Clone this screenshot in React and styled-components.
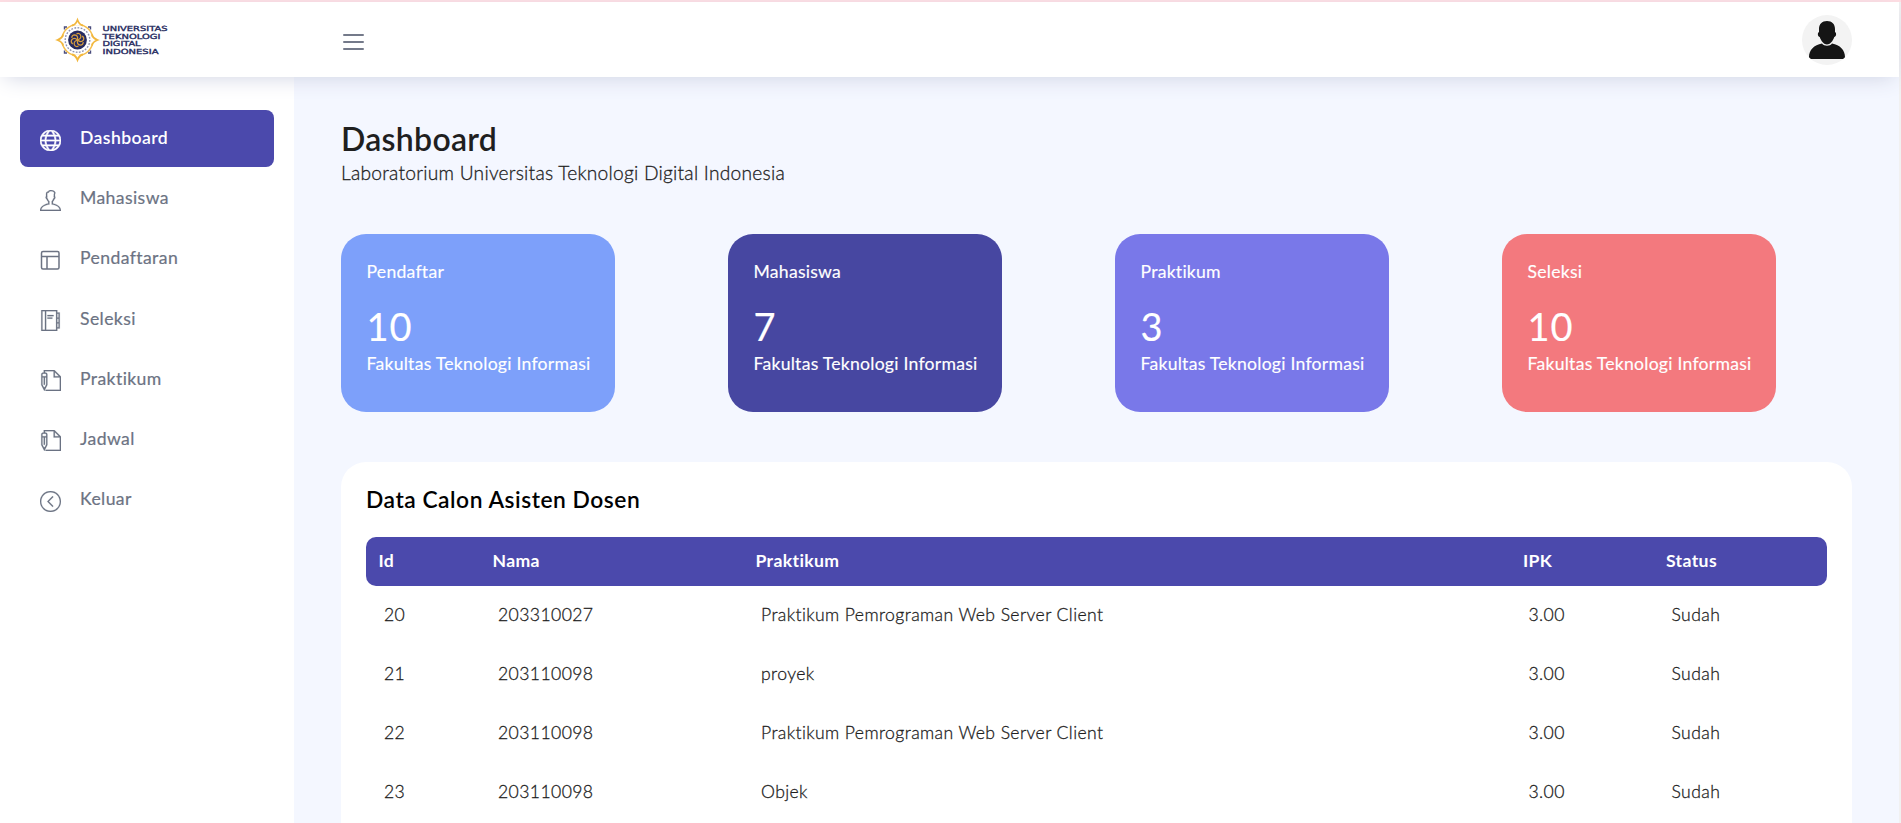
import React from 'react';
import styled, { createGlobalStyle } from 'styled-components';
import { TfiWorld, TfiUser, TfiAgenda, TfiWrite, TfiArrowCircleLeft } from 'react-icons/tfi';

const GlobalStyle = createGlobalStyle`
  * { box-sizing: border-box; }
  html { background: #f1f1f1; }
  body {
    margin: 0;
    height: 823px;
    overflow: hidden;
    font-family: Lato, "Open Sans", sans-serif;
    color: #1f1f1f;
  }
  h1, h2, p { margin: 0; }
`;

const Page = styled.div`
  height: 823px;
  display: flex;
  flex-direction: column;
  border-top: 2px solid #ffdde2;
`;

const Topbar = styled.header`
  position: relative;
  z-index: 2;
  flex: 0 0 75px;
  width: 1899px;
  display: flex;
  align-items: center;
  background: #fff;
  box-shadow: 0 5px 21px -5px #cdd1e1;
`;

const Brand = styled.div`
  width: 294px;
  padding-left: 54px;
  line-height: 0;
`;

const MenuButton = styled.button`
  display: flex;
  flex-direction: column;
  gap: 5px;
  margin: 4px 0 0 49px;
  padding: 0;
  border: 0;
  background: none;
`;

const MenuLine = styled.span`
  width: 21px;
  height: 2px;
  border-radius: 1px;
  background: #747a8a;
`;

const Avatar = styled.div`
  width: 50px;
  height: 50px;
  margin: 0 47px 0 auto;
  border-radius: 50%;
  overflow: hidden;
  background: #f3f3f3;
`;

const Body = styled.div`
  flex: 1;
  min-height: 0;
  width: 1899px;
  display: flex;
  background: #f4f7ff;
`;

const Sidebar = styled.nav`
  flex: 0 0 294px;
  padding: 33px 20px 0;
  display: flex;
  flex-direction: column;
  gap: 3.2px;
  background: #fff;
`;

const NavItem = styled.a`
  display: flex;
  align-items: center;
  height: 57px;
  padding-left: 20px;
  border-radius: 8px;
  font-size: 17.6px;
  letter-spacing: 0.4px;
  font-weight: ${(p) => (p.$active ? 600 : 400)};
  -webkit-text-stroke: ${(p) => (p.$active ? '0' : '0.2px')};
  color: ${(p) => (p.$active ? '#fff' : '#6c7383')};
  background: ${(p) => (p.$active ? '#4b49ac' : 'transparent')};

  svg {
    width: 21px;
    height: 21px;
    margin: 3px 19px 0 0;
    stroke-width: ${(p) => (p.$active ? 0.5 : 0.15)};
  }
`;

const NavLabel = styled.span`
  padding-bottom: 2px;
`;

const Main = styled.main`
  flex: 1;
  padding: 40px 47px 0;
  display: flex;
  flex-direction: column;
`;

const Title = styled.h1`
  font-size: 32px;
  line-height: 43px;
  font-weight: 600;
  letter-spacing: 0.28px;
`;

const Subtitle = styled.p`
  font-size: 19.2px;
  line-height: 26px;
  font-weight: 300;
  letter-spacing: 0.24px;
  -webkit-text-stroke: 0.3px;
`;

const Stats = styled.section`
  display: flex;
  gap: 113px;
  margin: 48px 0 50px;
`;

const StatCard = styled.article`
  width: 274px;
  height: 178px;
  padding: 25px 0 0 25.5px;
  border-radius: 25px;
  color: #fff;
  font-size: 17.6px;
  line-height: 26px;
  letter-spacing: 0.25px;
  white-space: nowrap;
  -webkit-text-stroke: 0.15px;
  background: ${(p) => p.$color};
`;

const StatValue = styled.p`
  margin: 17px 0 1px;
  font-size: 38px;
  line-height: 48px;
  letter-spacing: 1px;
`;

const Panel = styled.section`
  flex: 1;
  padding: 22.5px 25px 0;
  border-radius: 25px 25px 0 0;
  background: #fff;
  overflow: hidden;
`;

const PanelTitle = styled.h2`
  margin-bottom: 24.5px;
  font-size: 22.8px;
  line-height: 28px;
  font-weight: 600;
  letter-spacing: 0.52px;
  color: #010101;
`;

const Row = styled.div`
  display: grid;
  grid-template-columns: 114px 263px 767.5px 143px 1fr;
  align-items: center;
  height: 59px;
  padding: 0 0 2px 18px;
  font-size: 17.6px;
  font-weight: 300;
  letter-spacing: 0.4px;
  -webkit-text-stroke: 0.3px;
`;

const HeadRow = styled(Row)`
  height: 49px;
  padding-left: 12.5px;
  border-radius: 10px;
  font-weight: 700;
  letter-spacing: 0.36px;
  -webkit-text-stroke: 0;
  color: #fff;
  background: #4b49ac;
`;

function LayoutIcon() {
  return (
    <svg viewBox="0 0 21 21" fill="none" stroke="currentColor">
      <g strokeWidth="1.5">
        <rect x="1.5" y="1.5" width="17.5" height="17.5" rx="1.5" />
        <path d="M1.5 6.5H19M7 6.5V19" />
      </g>
    </svg>
  );
}

function Logo() {
  const words = [['UNIVERSITAS', 65], ['TEKNOLOGI', 58], ['DIGITAL', 38], ['INDONESIA', 56]];
  return (
    <svg width="116" height="48" viewBox="0 0 116 48">
      <g transform="translate(23.5 24)" fill="none">
        <circle r="15.500" stroke="#f5be4c" strokeWidth="1.5" />
        {[0, 90, 180, 270].map((a) => (
          <g key={a} transform={`rotate(${a})`}>
            <path d="M-5.500 -14.500Q-2 -15 0 -20Q2 -15 5.500 -14.500" stroke="#f2b73d" strokeWidth="1.8" fill="#fff" />
            <path d="M10.500 -13L13 -13L13 -10.500" stroke="#4a4c7c" strokeWidth="1.4" />
          </g>
        ))}
        <circle r="12.300" stroke="#8f92b0" strokeWidth="1.400" strokeDasharray="1.800 1.400" />
        <circle r="9.400" fill="#262b60" />
        {[0, 60, 120, 180, 240, 300].map((a) => (
          <path key={a} d="M0 0Q4.500 -1.500 3 -5Q1.500 -7.500 -1 -6" transform={`rotate(${a})`} stroke="#d99f3e" strokeWidth="1.200" />
        ))}
      </g>
      <g fill="#262b60" stroke="#262b60" strokeWidth="0.35" fontFamily="DejaVu Sans" fontSize="7">
        {words.map(([word, len], i) => (
          <text key={word} x="48.500" y={15 + i * 7.5} textLength={len} lengthAdjust="spacingAndGlyphs">{word}</text>
        ))}
      </g>
    </svg>
  );
}

function Person() {
  return (
    <svg width="50" height="50" viewBox="0 0 50 50" fill="#151515">
      <path d="M25 6C30 6 33 9 33 14V17C35 18 34 22 32.300 22C31 26 28 29.500 25 29.500S19 26 17.700 22C16 22 15 18 17 17V14C17 9 20 6 25 6Z" />
      <path d="M20 28.500C22 31.500 28 31.500 30 28.500C38 30 43 35 43 42Q43 44 41 44H9Q7 44 7 42C7 35 12 30 20 28.500Z" />
    </svg>
  );
}

const nav = [
  ['Dashboard', TfiWorld],
  ['Mahasiswa', TfiUser],
  ['Pendaftaran', LayoutIcon],
  ['Seleksi', TfiAgenda],
  ['Praktikum', TfiWrite],
  ['Jadwal', TfiWrite],
  ['Keluar', TfiArrowCircleLeft],
];

const stats = [
  ['Pendaftar', 10, '#7da0fa'],
  ['Mahasiswa', 7, '#4747a1'],
  ['Praktikum', 3, '#7978e9'],
  ['Seleksi', 10, '#f3797e'],
];

const rows = [
  ['20', '203310027', 'Praktikum Pemrograman Web Server Client', '3.00', 'Sudah'],
  ['21', '203110098', 'proyek', '3.00', 'Sudah'],
  ['22', '203110098', 'Praktikum Pemrograman Web Server Client', '3.00', 'Sudah'],
  ['23', '203110098', 'Objek', '3.00', 'Sudah'],
];

export default function App() {
  return (
    <Page>
      <GlobalStyle />
      <Topbar>
        <Brand><Logo /></Brand>
        <MenuButton aria-label="Menu"><MenuLine /><MenuLine /><MenuLine /></MenuButton>
        <Avatar><Person /></Avatar>
      </Topbar>
      <Body>
        <Sidebar>
          {nav.map(([label, Icon], i) => (
            <NavItem key={label} $active={i === 0}><Icon /><NavLabel>{label}</NavLabel></NavItem>
          ))}
        </Sidebar>
        <Main>
          <Title>Dashboard</Title>
          <Subtitle>Laboratorium Universitas Teknologi Digital Indonesia</Subtitle>
          <Stats>
            {stats.map(([label, value, color]) => (
              <StatCard key={label} $color={color}>
                <p>{label}</p>
                <StatValue>{value}</StatValue>
                <p>Fakultas Teknologi Informasi</p>
              </StatCard>
            ))}
          </Stats>
          <Panel>
            <PanelTitle>Data Calon Asisten Dosen</PanelTitle>
            <HeadRow>
              {['Id', 'Nama', 'Praktikum', 'IPK', 'Status'].map((h) => <span key={h}>{h}</span>)}
            </HeadRow>
            {rows.map((r) => (
              <Row key={r[0]}>{r.map((c, i) => <span key={i}>{c}</span>)}</Row>
            ))}
          </Panel>
        </Main>
      </Body>
    </Page>
  );
}
